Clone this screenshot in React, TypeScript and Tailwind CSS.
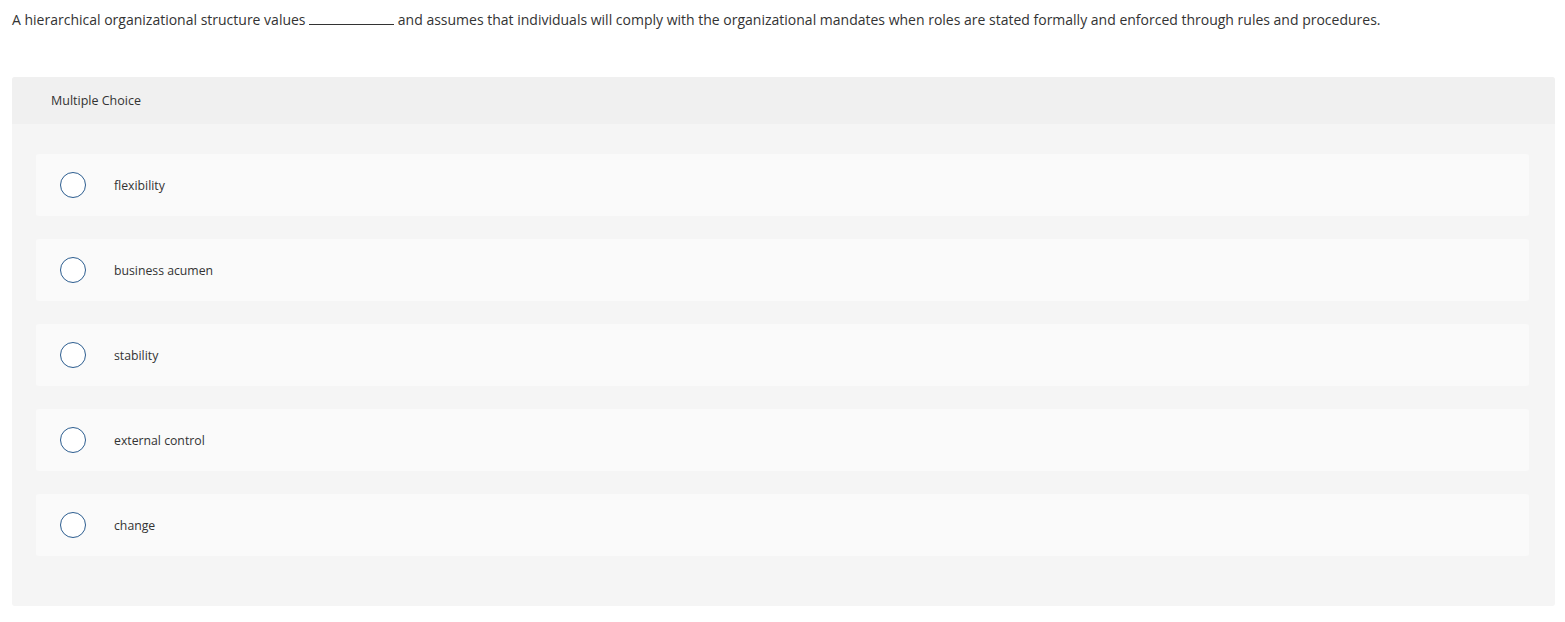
const options = ['flexibility', 'business acumen', 'stability', 'external control', 'change'];

export default function App() {
  return (
    <div className="min-h-screen bg-white text-[#333] font-['Open_Sans',sans-serif]">
      <div className="pl-3 pr-[10px] pt-[10px]">
        <p className="text-[14px] leading-[20px]">
          A hierarchical organizational structure values{' '}
          <span className="inline-block w-[85px] border-b border-[#333] align-baseline" />{' '}
          and assumes that individuals will comply with the organizational mandates when roles are stated formally and
          enforced through rules and procedures.
        </p>

        <div className="mt-[47px] rounded-[3px] bg-[#f5f5f5] pb-[50px]">
          <div className="flex h-[47px] items-center rounded-t-[3px] bg-[#f0f0f0] pl-[39px] pt-[2px] text-[12.5px]">
            Multiple Choice
          </div>
          <div className="flex flex-col gap-[23px] pl-6 pr-[26px] pt-[30px]">
            {options.map((opt) => (
              <label
                key={opt}
                className="flex h-[62px] cursor-pointer items-center rounded-[3px] bg-[#fafafa] pl-6"
              >
                <span className="h-[26px] w-[26px] shrink-0 rounded-full border-[1.5px] border-[#2c5d8f] bg-white" />
                <span className="ml-[28px] pt-[2px] text-[12.25px]">{opt}</span>
              </label>
            ))}
          </div>
        </div>
      </div>
    </div>
  );
}
